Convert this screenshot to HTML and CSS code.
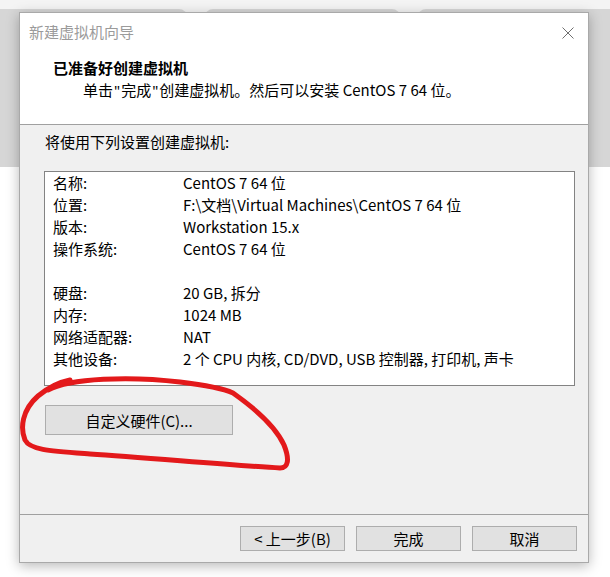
FILE: index.html
```html
<!DOCTYPE html>
<html lang="zh-CN">
<head>
  <meta charset="UTF-8" />
  <title>新建虚拟机向导</title>
  <link rel="stylesheet" href="styles.css">
</head>
<body>

  <div class="desk">
    <div class="tabs">
      <div class="tab tab-first"></div>
      <div class="tab tab-mid"></div>
      <div class="tab tab-last"></div>
    </div>
  </div>

  <div class="dialog">
    <div class="titlebar">
      <span class="title">新建虚拟机向导</span>
      <svg class="close" width="12" height="12" viewBox="0 0 12 12">
        <path d="M0.5 0.5 L11.5 11.5 M11.5 0.5 L0.5 11.5" stroke="#6f6f6f" stroke-width="1" fill="none"/>
      </svg>
    </div>

    <div class="header">
      <h1>已准备好创建虚拟机</h1>
      <p>单击<span class="q">"</span>完成<span class="q">"</span>创建虚拟机。然后可以安装 CentOS 7 64 位。</p>
    </div>

    <div class="content">
      <p class="intro">将使用下列设置创建虚拟机:</p>
      <div class="summary">
        <div class="row"><span class="label">名称:</span><span>CentOS 7 64 位</span></div>
        <div class="row"><span class="label">位置:</span><span>F:\文档\Virtual Machines\CentOS 7 64 位</span></div>
        <div class="row"><span class="label">版本:</span><span>Workstation 15.x</span></div>
        <div class="row"><span class="label">操作系统:</span><span>CentOS 7 64 位</span></div>
        <div class="row"></div>
        <div class="row"><span class="label">硬盘:</span><span>20 GB, 拆分</span></div>
        <div class="row"><span class="label">内存:</span><span>1024 MB</span></div>
        <div class="row"><span class="label">网络适配器:</span><span>NAT</span></div>
        <div class="row"><span class="label">其他设备:</span><span>2 个 CPU 内核, CD/DVD, USB 控制器, 打印机, 声卡</span></div>
      </div>
      <button class="btn btn-custom">自定义硬件(C)...</button>
    </div>

    <div class="footer">
      <button class="btn">&lt; 上一步(B)</button>
      <button class="btn">完成</button>
      <button class="btn">取消</button>
    </div>
  </div>

  <svg class="mark" width="610" height="577" viewBox="0 0 610 577">
    <path d="M48 390 C70 378, 130 376, 180 382 C205 385, 222 388, 233 393 C250 405, 275 425, 284 445 C290 460, 288 468, 280 468 C240 466, 150 458, 90 454 C50 451, 30 450, 25 440 C20 428, 22 410, 38 396 C50 386, 60 382, 70 380"
          stroke="#e3191b" stroke-width="5" fill="none" stroke-linecap="round" stroke-linejoin="round"/>
  </svg>

</body>
</html>
```

FILE: styles.css
```css
* {
  box-sizing: border-box;
  margin: 0; padding: 0;
}
body {
  font-family: "Noto Sans CJK SC", "Noto Sans", sans-serif;
  font-size: 15px;
  color: #000;
  background: #fff;
  width: 610px;
  height: 577px;
  overflow: hidden;
  position: relative;
}

/* backdrop behind the dialog */
.desk {
  background: #f4f4f4;
  padding-top: 9px;
}
.tabs {
  display: flex;
  gap: 18px;
}
.tab {
  height: 158px;
  background: #d6d6d6;
  border-radius: 8px 8px 0 0;
}
.tab-first { width: 187px; border-top-left-radius: 0; }
.tab-mid { width: 195px; }
.tab-last { flex: 1; border-top-right-radius: 0; }

/* dialog window */
.dialog {
  position: absolute;
  left: 19px;
  top: 12px;
  width: 570px;
  height: 551px;
  border: 1px solid #a9a9a9;
  background: #f0f0f0;
  display: flex;
  flex-direction: column;
  box-shadow: 0 3px 12px rgba(0,0,0,0.28);
}

.titlebar {
  height: 38px;
  background: #fff;
  display: flex;
  align-items: center;
  justify-content: space-between;
  padding: 0 14px 0 9px;
}
.close {
  margin-top: 2px;
}
.title {
  color: #9b9b9b;
  line-height: 20px;
}

.header {
  height: 74px;
  background: #fff;
  border-bottom: 1px solid #a0a0a0;
  padding: 7px 0 0 33px;
}
.header h1 {
  font-size: 15px;
  font-weight: bold;
  line-height: 20px;
}
.header p {
  margin-top: 2px;
  padding-left: 30px;
  line-height: 20px;
}
.q {
  font-family: "Noto Sans", sans-serif;
  padding: 0 1px;
}

.content {
  flex: 1;
  padding: 7px 13px 0 24px;
}
.intro {
  line-height: 20px;
  padding-left: 1px;
}
.summary {
  margin-top: 19px;
  height: 215px;
  background: #fff;
  border: 1px solid #838383;
  padding: 0 8px;
}
.row {
  display: flex;
  height: 22px;
  line-height: 20px;
  padding-top: 1px;
  white-space: nowrap;
}
.label {
  width: 130px;
}

.btn {
  font-family: inherit;
  font-size: 15px;
  color: #000;
  background: #e1e1e1;
  border: 1px solid #adadad;
  width: 105px;
  height: 25px;
  line-height: 21px;
}
.btn-custom {
  display: block;
  margin: 19px 0 0 1px;
  width: 188px;
  height: 30px;
}

.footer {
  height: 48px;
  border-top: 1px solid #a0a0a0;
  display: flex;
  justify-content: flex-end;
  gap: 11px;
  padding: 11px 11px 0 0;
}

/* hand-drawn annotation */
.mark {
  position: absolute;
  left: 0;
  top: 0;
  pointer-events: none;
}
```
